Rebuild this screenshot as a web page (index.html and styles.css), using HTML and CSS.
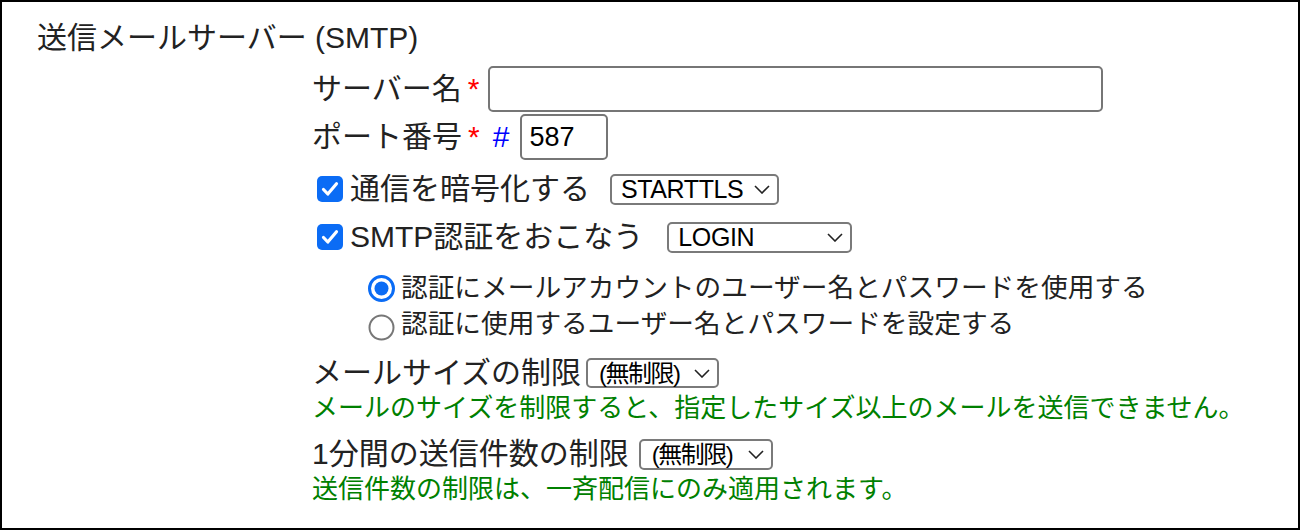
FILE: index.html
```
<!DOCTYPE html>
<html lang="ja">
<head>
<meta charset="utf-8">
<title>送信メールサーバー (SMTP)</title>
<link rel="stylesheet" href="styles.css">
</head>
<body>
<div class="frame">
  <div class="heading">送信メールサーバー (SMTP)</div>
  <div class="fields">
    <div class="row row-input">
      <span class="label">サーバー名</span><span class="req">*</span>
      <input class="text text-wide" type="text">
    </div>
    <div class="row row-input">
      <span class="label">ポート番号</span><span class="req">*</span><span class="num">#</span>
      <input class="text text-port" type="text" value="587">
    </div>
    <div class="row row-check row-first">
      <svg class="cb" width="26" height="26" viewBox="0 0 26 26"><rect x="0" y="0" width="26" height="26" rx="5" fill="#0b6cf5"/><polyline points="6.5,13.5 10.8,18 19.5,7.8" fill="none" stroke="#fff" stroke-width="3.2" stroke-linecap="round" stroke-linejoin="round"/></svg>
      <span class="label">通信を暗号化する</span>
      <div class="select sel-tls"><span class="sel-text">STARTTLS</span><svg class="chev" width="16" height="9" viewBox="0 0 16 9"><polyline points="1,1 8,8 15,1" fill="none" stroke="#222" stroke-width="1.6"/></svg></div>
    </div>
    <div class="row row-check">
      <svg class="cb" width="26" height="26" viewBox="0 0 26 26"><rect x="0" y="0" width="26" height="26" rx="5" fill="#0b6cf5"/><polyline points="6.5,13.5 10.8,18 19.5,7.8" fill="none" stroke="#fff" stroke-width="3.2" stroke-linecap="round" stroke-linejoin="round"/></svg>
      <span class="label">SMTP認証をおこなう</span>
      <div class="select sel-auth"><span class="sel-text">LOGIN</span><svg class="chev" width="16" height="9" viewBox="0 0 16 9"><polyline points="1,1 8,8 15,1" fill="none" stroke="#222" stroke-width="1.6"/></svg></div>
    </div>
    <div class="row row-radio row-radio-first">
      <svg class="rb" width="27" height="27" viewBox="0 0 27 27"><circle cx="13.5" cy="13.5" r="12" fill="#fff" stroke="#0b6cf5" stroke-width="3"/><circle cx="13.5" cy="13.5" r="7" fill="#0b6cf5"/></svg>
      <span class="radio-text">認証にメールアカウントのユーザー名とパスワードを使用する</span>
    </div>
    <div class="row row-radio">
      <svg class="rb rb-off" width="27" height="27" viewBox="0 0 27 27"><circle cx="13.5" cy="13.5" r="12" fill="#fff" stroke="#777" stroke-width="2"/></svg>
      <span class="radio-text">認証に使用するユーザー名とパスワードを設定する</span>
    </div>
    <div class="row row-limit row-size">
      <span class="label">メールサイズの制限</span>
      <div class="select sel-size"><span class="sel-text sel-cjk">(無制限)</span><svg class="chev" width="16" height="9" viewBox="0 0 16 9"><polyline points="1,1 8,8 15,1" fill="none" stroke="#222" stroke-width="1.6"/></svg></div>
    </div>
    <div class="note">メールのサイズを制限すると、指定したサイズ以上のメールを送信できません。</div>
    <div class="row row-limit row-count">
      <span class="label">1分間の送信件数の制限</span>
      <div class="select sel-count"><span class="sel-text sel-cjk">(無制限)</span><svg class="chev" width="16" height="9" viewBox="0 0 16 9"><polyline points="1,1 8,8 15,1" fill="none" stroke="#222" stroke-width="1.6"/></svg></div>
    </div>
    <div class="note">送信件数の制限は、一斉配信にのみ適用されます。</div>
  </div>
</div>
</body>
</html>
```

FILE: styles.css
```
html, body {
  margin: 0;
  padding: 0;
  background: #fff;
}

body {
  font-family: "Liberation Sans", "Noto Sans CJK JP", sans-serif;
  color: #222;
}

.frame {
  width: 1300px;
  height: 530px;
  box-sizing: border-box;
  border: 2px solid #000;
  padding-top: 16px;
}

.heading {
  height: 40px;
  line-height: 40px;
  font-size: 30px;
  padding-left: 35px;
}

.fields {
  display: flex;
  flex-direction: column;
  padding-left: 310px;
  margin-top: 7px;
}

.row {
  display: flex;
  align-items: center;
  font-size: 30px;
  line-height: 36px;
  white-space: nowrap;
}

.row-input {
  height: 48px;
}

.row-check {
  height: 48px;
}

.row-first {
  margin-top: 4px;
}

.req {
  color: #f00;
  margin-left: 6px;
}

.num {
  color: #00f;
  margin-left: 13px;
}

.text {
  box-sizing: border-box;
  height: 46px;
  border: 2px solid #767676;
  border-radius: 5px;
  background: #fff;
  font-family: "Liberation Sans", sans-serif;
  font-size: 27px;
  color: #000;
  padding: 0 7px;
  margin: 0;
  outline: none;
}

.text-wide {
  width: 615px;
  margin-left: 9px;
}

.text-port {
  width: 88px;
  margin-left: 11px;
}

.cb {
  flex: none;
  margin-left: 5px;
  margin-right: 7px;
}

.select {
  box-sizing: border-box;
  height: 31px;
  display: flex;
  align-items: center;
  justify-content: space-between;
  border: 2px solid #7a7a7a;
  border-radius: 5px;
  background: #fff;
  padding: 0 7px 0 9px;
  color: #000;
  font-size: 25px;
  line-height: 27px;
}

.sel-text {
  letter-spacing: -0.4px;
}

.sel-cjk {
  font-size: 24px;
  letter-spacing: -1.5px;
}

.chev {
  flex: none;
}

.sel-tls {
  width: 169px;
  margin-left: 20px;
}

.sel-auth {
  width: 185px;
  margin-left: 24px;
}

.row-radio {
  height: 36px;
  padding-left: 56px;
  font-size: 26.7px;
}

.row-radio-first {
  margin-top: 9px;
}

.rb {
  flex: none;
  margin-right: 6px;
}

.rb-off {
  margin-top: 6px;
}

.row-limit {
  height: 36px;
}

.row-size {
  margin-top: 13px;
}

.row-count {
  margin-top: 11px;
}

.sel-size {
  width: 133px;
  height: 30px;
  margin-left: 5px;
  padding-left: 11px;
}

.sel-count {
  width: 134px;
  margin-left: 10px;
  padding-left: 11px;
}

.note {
  height: 34px;
  line-height: 34px;
  font-size: 26px;
  color: #008000;
  white-space: nowrap;
}
```
